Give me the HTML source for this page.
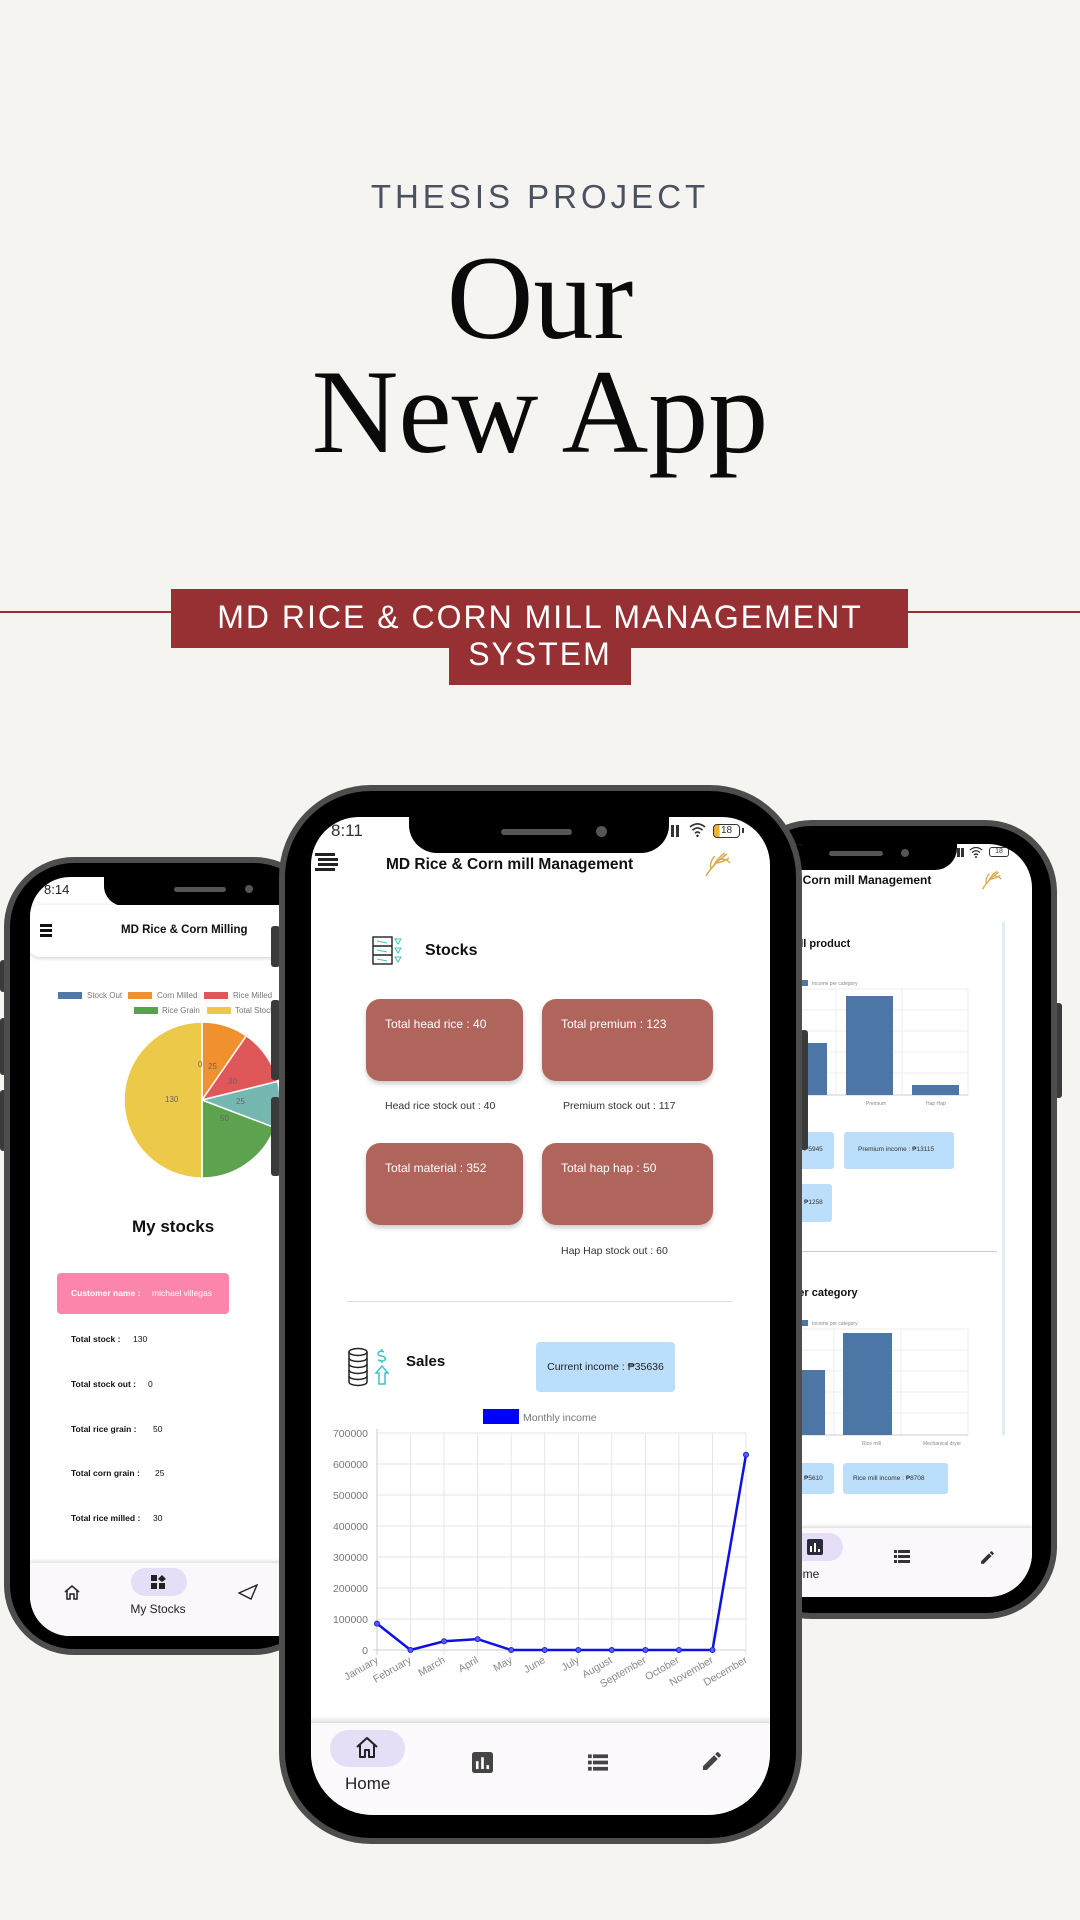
<!DOCTYPE html>
<html><head><meta charset="utf-8"><style>
*{margin:0;padding:0;box-sizing:border-box}
body{width:1080px;height:1920px;background:#f5f4f0;position:relative;overflow:hidden;font-family:"Liberation Sans",sans-serif}
.a{position:absolute}
.t{position:absolute;white-space:nowrap}
.frame{position:absolute;background:#000;border:6px solid #4d4d4d}
.scr{position:absolute;background:#fff;overflow:hidden}
.btn{position:absolute;background:#3a3a3a;border-radius:3px}
</style></head><body>

<div class="t" style="left:0;width:1080px;top:178px;text-align:center;font-size:33px;letter-spacing:4px;color:#4a5262">THESIS PROJECT</div>
<div class="t" style="left:0;width:1080px;top:238px;text-align:center;font-family:'Liberation Serif',serif;font-size:120px;line-height:120px;color:#0a0a0a">Our</div>
<div class="t" style="left:0;width:1080px;top:352px;text-align:center;font-family:'Liberation Serif',serif;font-size:120px;line-height:120px;color:#0a0a0a">New App</div>

<div class="a" style="left:0;top:611px;width:1080px;height:2px;background:#963033"></div>
<div class="a" style="left:171px;top:589px;width:737px;height:59px;background:#963033"></div>
<div class="a" style="left:449px;top:646px;width:182px;height:39px;background:#963033"></div>
<div class="t" style="left:0;width:1080px;top:599px;text-align:center;font-size:32px;letter-spacing:2px;color:#fff;line-height:36px">MD RICE &amp; CORN MILL MANAGEMENT</div>
<div class="t" style="left:0;width:1080px;top:636px;text-align:center;font-size:32px;letter-spacing:2px;color:#fff;line-height:36px">SYSTEM</div>

<!-- LEFT PHONE -->
<div class="btn" style="left:0;top:960px;width:6px;height:32px"></div>
<div class="btn" style="left:0;top:1018px;width:6px;height:57px"></div>
<div class="btn" style="left:0;top:1090px;width:6px;height:61px"></div>
<div class="frame" style="left:4px;top:857px;width:320px;height:798px;border-radius:70px"></div>
<div class="scr" style="left:30px;top:877px;width:290px;height:759px;border-radius:40px">
  <div class="t" style="left:14px;top:5px;font-size:13px;color:#222">8:14</div>
  <div class="a" style="left:74px;top:0;width:230px;height:29px;background:#000;border-bottom-left-radius:20px"></div>
  <div class="a" style="left:144px;top:10px;width:52px;height:5px;background:#555;border-radius:3px"></div>
  <div class="a" style="left:215px;top:8px;width:8px;height:8px;background:#555;border-radius:50%"></div>
  <div class="a" style="left:-2px;top:28px;width:300px;height:52px;background:#fff;border-radius:12px;box-shadow:0 1px 4px rgba(0,0,0,.2)"></div>
  <div class="a" style="left:10px;top:47px;width:12px;height:3px;background:#111;box-shadow:0 5px 0 #111,0 10px 0 #111"></div>
  <div class="t" style="left:91px;top:47px;font-size:11.5px;font-weight:bold;color:#111">MD Rice &amp; Corn Milling</div>
  <svg class="a" style="left:0;top:0" width="290" height="759">
    <g font-family="Liberation Sans" font-size="8" fill="#777">
      <rect x="28" y="115" width="24" height="7" fill="#4e79a7"/><text x="57" y="121">Stock Out</text>
      <rect x="98" y="115" width="24" height="7" fill="#f28e2b"/><text x="127" y="121">Corn Milled</text>
      <rect x="174" y="115" width="24" height="7" fill="#e15759"/><text x="203" y="121">Rice Milled</text>
      <rect x="104" y="130" width="24" height="7" fill="#59a14f"/><text x="132" y="136">Rice Grain</text>
      <rect x="177" y="130" width="24" height="7" fill="#edc948"/><text x="205" y="136">Total Stock</text>
    </g>
    <g stroke="#fff" stroke-width="1.5">
      <path d="M172 223 L172 145 A78 78 0 0 1 216.3 158.8Z" fill="#f0902f"/>
      <path d="M172 223 L216.3 158.8 A78 78 0 0 1 247.7 204.4Z" fill="#e05759"/>
      <path d="M172 223 L247.7 204.4 A78 78 0 0 1 244.9 250.7Z" fill="#76b7b2"/>
      <path d="M172 223 L244.9 250.7 A78 78 0 0 1 172 301Z" fill="#5da34f"/>
      <path d="M172 223 L172 301 A78 78 0 0 1 172 145Z" fill="#ecc948"/>
    </g>
    <g font-family="Liberation Sans" font-size="8" fill="#666">
      <text x="135" y="225">130</text><text x="168" y="190">0</text><text x="178" y="192">25</text>
      <text x="198" y="207">30</text><text x="206" y="227">25</text><text x="190" y="244">50</text>
    </g>
  </svg>
  <div class="t" style="left:102px;top:340px;font-size:17px;font-weight:bold;color:#111">My stocks</div>
  <div class="a" style="left:27px;top:396px;width:172px;height:41px;background:#fc86ab;border-radius:4px"></div>
  <div class="t" style="left:41px;top:411px;font-size:8.5px;font-weight:bold;color:#fff">Customer name :</div>
  <div class="t" style="left:122px;top:411px;font-size:8.5px;color:#fff">michael villegas</div>
  <div style="font-size:8.5px;color:#111">
    <div class="t" style="left:41px;top:457px;font-weight:bold">Total stock :</div><div class="t" style="left:103px;top:457px">130</div>
    <div class="t" style="left:41px;top:502px;font-weight:bold">Total stock out :</div><div class="t" style="left:118px;top:502px">0</div>
    <div class="t" style="left:41px;top:547px;font-weight:bold">Total rice grain :</div><div class="t" style="left:123px;top:547px">50</div>
    <div class="t" style="left:41px;top:591px;font-weight:bold">Total corn grain :</div><div class="t" style="left:125px;top:591px">25</div>
    <div class="t" style="left:41px;top:636px;font-weight:bold">Total rice milled :</div><div class="t" style="left:123px;top:636px">30</div>
  </div>
  <div class="a" style="left:0;top:686px;width:290px;height:80px;background:#fbf8fc;box-shadow:0 -2px 3px rgba(0,0,0,.12)"></div>
  <div class="a" style="left:101px;top:691px;width:56px;height:28px;background:#e6def6;border-radius:14px"></div>
  <svg class="a" style="left:33px;top:707px" width="18" height="17" viewBox="0 0 18 17"><path d="M2 8 L9 2 L16 8 M4 7 V15 H7 V10 H11 V15 H14 V7" fill="none" stroke="#222" stroke-width="1.5"/></svg>
  <svg class="a" style="left:121px;top:698px" width="15" height="15" viewBox="0 0 15 15"><rect x="0" y="0" width="6" height="6" fill="#222"/><rect x="0" y="8" width="6" height="6" fill="#222"/><rect x="8" y="8" width="6" height="6" fill="#222"/><path d="M11 0 L15 4 L11 7 L7 4Z" fill="#222"/></svg>
  <div class="t" style="left:98px;top:725px;font-size:12px;color:#222;width:60px;text-align:center">My Stocks</div>
  <svg class="a" style="left:208px;top:707px" width="20" height="16" viewBox="0 0 20 16"><path d="M1 9 L19 1 L13 15 Z M1 9 L13 15" fill="none" stroke="#222" stroke-width="1.4"/></svg>
</div>

<!-- RIGHT PHONE -->
<div class="btn" style="left:1055px;top:1003px;width:7px;height:95px"></div>
<div class="frame" style="left:740px;top:820px;width:317px;height:799px;border-radius:72px"></div>
<div class="scr" style="left:760px;top:844px;width:272px;height:753px;border-radius:44px">
  <div class="a" style="left:0;top:0;width:197px;height:26px;background:#000;border-bottom-right-radius:22px"></div>
  <div class="a" style="left:69px;top:7px;width:54px;height:5px;background:#555;border-radius:3px"></div>
  <div class="a" style="left:141px;top:5px;width:8px;height:8px;background:#555;border-radius:50%"></div>
  <div class="a" style="left:197px;top:4px;width:3px;height:9px;background:#333;box-shadow:4px 0 0 #333"></div>
  <svg class="a" style="left:209px;top:2px" width="14" height="12" viewBox="0 0 14 12"><path d="M1 4 Q7 -1 13 4 M3 6.5 Q7 3 11 6.5 M5 9 Q7 7 9 9" fill="none" stroke="#333" stroke-width="1.3"/><circle cx="7" cy="11" r="1" fill="#333"/></svg>
  <div class="a" style="left:229px;top:3px;width:20px;height:10px;border:1.3px solid #333;border-radius:3px;font-size:7px;line-height:8px;text-align:center;color:#333">18</div>
  <div class="t" style="left:-20px;top:29px;font-size:12px;font-weight:bold;color:#111">MD Rice &amp; Corn mill Management</div>
  <svg class="a" style="left:220px;top:25px" width="22" height="21" viewBox="0 0 28 27"><g fill="none" stroke="#d8a94a" stroke-width="1.6"><path d="M3 26 Q10 14 24 4"/><path d="M10 17 Q14 8 22 3 M14 13 Q20 12 26 8 M8 20 Q6 12 12 6 M18 9 Q24 9 27 13"/></g></svg>
  <div class="a" style="left:242px;top:78px;width:3px;height:513px;background:#dcefed"></div>
  <div class="t" style="left:28px;top:94px;font-size:11px;font-weight:bold;color:#111">Mill product</div>
  <svg class="a" style="left:0;top:0" width="272" height="753">
    <g stroke="#eee" stroke-width="1">
      <line x1="10" y1="145" x2="208" y2="145"/><line x1="10" y1="166" x2="208" y2="166"/><line x1="10" y1="187" x2="208" y2="187"/><line x1="10" y1="208" x2="208" y2="208"/><line x1="10" y1="229" x2="208" y2="229"/>
      <line x1="76" y1="145" x2="76" y2="251"/><line x1="142" y1="145" x2="142" y2="251"/><line x1="208" y1="145" x2="208" y2="251"/>
      <line x1="10" y1="485" x2="208" y2="485"/><line x1="10" y1="506" x2="208" y2="506"/><line x1="10" y1="527" x2="208" y2="527"/><line x1="10" y1="548" x2="208" y2="548"/><line x1="10" y1="569" x2="208" y2="569"/>
      <line x1="74" y1="485" x2="74" y2="591"/><line x1="141" y1="485" x2="141" y2="591"/><line x1="208" y1="485" x2="208" y2="591"/>
    </g>
    <line x1="10" y1="251" x2="208" y2="251" stroke="#ccc"/><line x1="10" y1="591" x2="208" y2="591" stroke="#ccc"/>
    <g fill="#4b76a6">
      <rect x="30" y="136" width="18" height="6"/><rect x="20" y="199" width="47" height="52"/><rect x="86" y="152" width="47" height="99"/><rect x="152" y="241" width="47" height="10"/>
      <rect x="30" y="476" width="18" height="6"/><rect x="20" y="526" width="45" height="65"/><rect x="83" y="489" width="49" height="102"/>
    </g>
    <g font-family="Liberation Sans" font-size="5" fill="#888">
      <text x="52" y="141">Income per category</text><text x="52" y="481">Income per category</text>
      <text x="106" y="261">Premium</text><text x="166" y="261">Hap Hap</text>
      <text x="102" y="601">Rice mill</text><text x="163" y="601">Mechanical dryer</text>
    </g>
  </svg>
  <div class="a" style="left:-40px;top:288px;width:114px;height:37px;background:#bbdefb;border-radius:3px"></div>
  <div class="t" style="left:44px;top:302px;font-size:6.5px;color:#333">₱5945</div>
  <div class="a" style="left:84px;top:288px;width:110px;height:37px;background:#bbdefb;border-radius:3px"></div>
  <div class="t" style="left:98px;top:302px;font-size:6.5px;color:#333">Premium income : ₱13115</div>
  <div class="a" style="left:-40px;top:340px;width:112px;height:38px;background:#bbdefb;border-radius:3px"></div>
  <div class="t" style="left:44px;top:355px;font-size:6.5px;color:#333">₱1258</div>
  <div class="a" style="left:0;top:407px;width:237px;height:1px;background:#ccc"></div>
  <div class="t" style="left:-10px;top:443px;font-size:11px;font-weight:bold;color:#111">Income per category</div>
  <div class="a" style="left:-40px;top:619px;width:114px;height:31px;background:#bbdefb;border-radius:3px"></div>
  <div class="t" style="left:44px;top:631px;font-size:6.5px;color:#333">₱5610</div>
  <div class="a" style="left:83px;top:619px;width:105px;height:31px;background:#bbdefb;border-radius:3px"></div>
  <div class="t" style="left:93px;top:631px;font-size:6.5px;color:#333">Rice mill income : ₱8708</div>
  <div class="a" style="left:0;top:684px;width:272px;height:80px;background:#fbf8fc;box-shadow:0 -2px 3px rgba(0,0,0,.12)"></div>
  <div class="a" style="left:20px;top:689px;width:63px;height:28px;background:#e6def6;border-radius:14px"></div>
  <svg class="a" style="left:47px;top:695px" width="16" height="16" viewBox="0 0 16 16"><rect width="16" height="16" rx="2" fill="#2a2a3a"/><rect x="3" y="7" width="2" height="6" fill="#fff"/><rect x="7" y="4" width="2" height="9" fill="#fff"/><rect x="11" y="10" width="2" height="3" fill="#fff"/></svg>
  <div class="t" style="left:20px;top:723px;font-size:12px;color:#222">Income</div>
  <svg class="a" style="left:134px;top:706px" width="16" height="13" viewBox="0 0 16 13"><g fill="#333"><rect x="0" y="0" width="3" height="3"/><rect x="4" y="0" width="12" height="3"/><rect x="0" y="5" width="3" height="3"/><rect x="4" y="5" width="12" height="3"/><rect x="0" y="10" width="3" height="3"/><rect x="4" y="10" width="12" height="3"/></g></svg>
  <svg class="a" style="left:219px;top:705px" width="17" height="17" viewBox="0 0 24 24"><path d="M3 17.25V21h3.75L17.8 9.94l-3.75-3.75L3 17.25zM20.7 7.04a1 1 0 0 0 0-1.41l-2.34-2.34a1 1 0 0 0-1.41 0l-1.83 1.83 3.75 3.75 1.83-1.83z" fill="#333"/></svg>
</div>

<!-- CENTER PHONE -->
<div class="btn" style="left:271px;top:926px;width:9px;height:41px"></div>
<div class="btn" style="left:271px;top:1000px;width:9px;height:80px"></div>
<div class="btn" style="left:271px;top:1097px;width:9px;height:79px"></div>
<div class="btn" style="left:800px;top:1030px;width:8px;height:120px"></div>
<div class="frame" style="left:279px;top:785px;width:523px;height:1059px;border-radius:92px"></div>
<div class="scr" style="left:311px;top:817px;width:459px;height:998px;border-radius:48px 48px 62px 62px">
  <div class="t" style="left:20px;top:4px;font-size:17px;color:#333">8:11</div>
  <div class="a" style="left:98px;top:0;width:260px;height:36px;background:#000;border-radius:0 0 28px 28px"></div>
  <div class="a" style="left:190px;top:12px;width:71px;height:6px;background:#555;border-radius:3px"></div>
  <div class="a" style="left:285px;top:9px;width:11px;height:11px;background:#555;border-radius:50%"></div>
  <div class="a" style="left:360px;top:8px;width:3px;height:12px;background:#333;box-shadow:5px 0 0 #333"></div>
  <svg class="a" style="left:377px;top:5px" width="19" height="15" viewBox="0 0 14 12"><path d="M1 4 Q7 -1 13 4 M3 6.5 Q7 3 11 6.5 M5 9 Q7 7 9 9" fill="none" stroke="#333" stroke-width="1.3"/><circle cx="7" cy="11" r="1" fill="#333"/></svg>
  <div class="a" style="left:402px;top:7px;width:27px;height:14px;border:1.5px solid #333;border-radius:4px;font-size:10px;line-height:11px;text-align:center;color:#333;background:linear-gradient(90deg,#f2b233 0 22%,transparent 22%)">18</div>
  <div class="a" style="left:431px;top:11px;width:2px;height:5px;background:#333"></div>
  <div class="a" style="left:4px;top:36px;width:20px;height:3px;background:#222;box-shadow:3px 5px 0 #222,3px 10px 0 #222,0 15px 0 #222;"></div>
  <div class="t" style="left:75px;top:39px;font-size:15.5px;font-weight:bold;color:#111">MD Rice &amp; Corn mill Management</div>
  <svg class="a" style="left:392px;top:33px" width="28" height="27" viewBox="0 0 28 27"><g fill="none" stroke="#d8a94a" stroke-width="1.4"><path d="M3 26 Q10 14 24 4"/><path d="M10 17 Q14 8 22 3 M14 13 Q20 12 26 8 M8 20 Q6 12 12 6 M18 9 Q24 9 27 13"/></g></svg>
  <svg class="a" style="left:61px;top:119px" width="30" height="29" viewBox="0 0 30 29"><g fill="none" stroke="#222" stroke-width="1.4"><rect x="1" y="1" width="19" height="27"/><line x1="1" y1="10" x2="20" y2="10"/><line x1="1" y1="19" x2="20" y2="19"/></g><g fill="none" stroke="#3cc4c4" stroke-width="1"><path d="M5 5 L15 7 M5 14 L15 16 M5 23 L15 25"/><path d="M23 3 H29 L26 8Z M23 12 H29 L26 17Z M23 21 H29 L26 26Z"/></g></svg>
  <div class="t" style="left:114px;top:125px;font-size:16px;font-weight:bold;color:#111">Stocks</div>
  <div class="a" style="left:55px;top:182px;width:157px;height:82px;background:#b0655c;border-radius:14px;box-shadow:0 3px 5px rgba(0,0,0,.2)"></div>
  <div class="a" style="left:231px;top:182px;width:171px;height:82px;background:#b0655c;border-radius:14px;box-shadow:0 3px 5px rgba(0,0,0,.2)"></div>
  <div class="a" style="left:55px;top:326px;width:157px;height:82px;background:#b0655c;border-radius:14px;box-shadow:0 3px 5px rgba(0,0,0,.2)"></div>
  <div class="a" style="left:231px;top:326px;width:171px;height:82px;background:#b0655c;border-radius:14px;box-shadow:0 3px 5px rgba(0,0,0,.2)"></div>
  <div class="t" style="left:74px;top:200px;font-size:12px;color:#fff">Total head rice : 40</div>
  <div class="t" style="left:250px;top:200px;font-size:12px;color:#fff">Total premium : 123</div>
  <div class="t" style="left:74px;top:344px;font-size:12px;color:#fff">Total material : 352</div>
  <div class="t" style="left:250px;top:344px;font-size:12px;color:#fff">Total hap hap : 50</div>
  <div class="t" style="left:74px;top:283px;font-size:10.5px;color:#333">Head rice stock out : 40</div>
  <div class="t" style="left:252px;top:283px;font-size:10.5px;color:#333">Premium stock out : 117</div>
  <div class="t" style="left:250px;top:428px;font-size:10.5px;color:#333">Hap Hap stock out : 60</div>
  <div class="a" style="left:36px;top:484px;width:385px;height:1px;background:#ddd"></div>
  <svg class="a" style="left:36px;top:530px" width="42" height="41" viewBox="0 0 42 41"><g fill="none" stroke="#222" stroke-width="1.5"><ellipse cx="11" cy="5" rx="9" ry="3.5"/><path d="M2 5 V35 A9 3.5 0 0 0 20 35 V5"/><path d="M2 11 A9 3.5 0 0 0 20 11 M2 17 A9 3.5 0 0 0 20 17 M2 23 A9 3.5 0 0 0 20 23 M2 29 A9 3.5 0 0 0 20 29"/></g><g fill="none" stroke="#3cc4c4" stroke-width="1.5"><path d="M35 2 V4 M37 5 Q33 3 31 6 Q31 9 35 9 Q39 10 38 13 Q36 15 31 13 M35 14 V16"/><path d="M35 19 L29 26 H32 V37 H38 V26 H41Z"/></g></svg>
  <div class="t" style="left:95px;top:536px;font-size:15px;font-weight:bold;color:#111">Sales</div>
  <div class="a" style="left:225px;top:525px;width:139px;height:50px;background:#bbdefb;border-radius:4px"></div>
  <div class="t" style="left:225px;top:544px;width:139px;text-align:center;font-size:10.5px;color:#222">Current income : ₱35636</div>
  <svg class="a" style="left:0;top:0" width="459" height="998">
    <rect x="172" y="592" width="36" height="15" fill="#0000ff"/>
    <text x="212" y="604" font-family="Liberation Sans" font-size="10.5" fill="#777">Monthly income</text>
    <g stroke="#e6e6e6" stroke-width="1">
      <line x1="66" y1="616" x2="435" y2="616"/><line x1="66" y1="647" x2="435" y2="647"/><line x1="66" y1="678" x2="435" y2="678"/><line x1="66" y1="709" x2="435" y2="709"/><line x1="66" y1="740" x2="435" y2="740"/><line x1="66" y1="771" x2="435" y2="771"/><line x1="66" y1="802" x2="435" y2="802"/>
      <line x1="99.5" y1="616" x2="99.5" y2="838"/><line x1="133.1" y1="616" x2="133.1" y2="838"/><line x1="166.6" y1="616" x2="166.6" y2="838"/><line x1="200.2" y1="616" x2="200.2" y2="838"/><line x1="233.7" y1="616" x2="233.7" y2="838"/><line x1="267.3" y1="616" x2="267.3" y2="838"/><line x1="300.8" y1="616" x2="300.8" y2="838"/><line x1="334.4" y1="616" x2="334.4" y2="838"/><line x1="367.9" y1="616" x2="367.9" y2="838"/><line x1="401.5" y1="616" x2="401.5" y2="838"/><line x1="435" y1="616" x2="435" y2="838"/>
    </g>
    <line x1="66" y1="612" x2="66" y2="838" stroke="#ccc"/><line x1="62" y1="833" x2="435" y2="833" stroke="#ccc"/>
    <g font-family="Liberation Sans" font-size="10.5" fill="#777" text-anchor="end">
      <text x="57" y="620">700000</text><text x="57" y="651">600000</text><text x="57" y="682">500000</text><text x="57" y="713">400000</text><text x="57" y="744">300000</text><text x="57" y="775">200000</text><text x="57" y="806">100000</text><text x="57" y="837">0</text>
    </g>
    <polyline points="66,806.6 99.5,833 133.1,824.3 166.6,822.1 200.2,833 233.7,833 267.3,833 300.8,833 334.4,833 367.9,833 401.5,833 435,637.7" fill="none" stroke="#1010e0" stroke-width="2.5"/>
    <g fill="#5060f0" stroke="#2020d0" stroke-width="1">
      <circle cx="66" cy="806.6" r="2.5"/><circle cx="99.5" cy="833" r="2.5"/><circle cx="133.1" cy="824.3" r="2.5"/><circle cx="166.6" cy="822.1" r="2.5"/><circle cx="200.2" cy="833" r="2.5"/><circle cx="233.7" cy="833" r="2.5"/><circle cx="267.3" cy="833" r="2.5"/><circle cx="300.8" cy="833" r="2.5"/><circle cx="334.4" cy="833" r="2.5"/><circle cx="367.9" cy="833" r="2.5"/><circle cx="401.5" cy="833" r="2.5"/><circle cx="435" cy="637.7" r="2.5"/>
    </g>
    <g font-family="Liberation Sans" font-size="10.5" fill="#888" text-anchor="end">
      <text transform="translate(68,845) rotate(-30)">January</text>
      <text transform="translate(101,845) rotate(-30)">February</text>
      <text transform="translate(135,845) rotate(-30)">March</text>
      <text transform="translate(168,845) rotate(-30)">April</text>
      <text transform="translate(202,845) rotate(-30)">May</text>
      <text transform="translate(235,845) rotate(-30)">June</text>
      <text transform="translate(269,845) rotate(-30)">July</text>
      <text transform="translate(302,845) rotate(-30)">August</text>
      <text transform="translate(336,845) rotate(-30)">September</text>
      <text transform="translate(369,845) rotate(-30)">October</text>
      <text transform="translate(403,845) rotate(-30)">November</text>
      <text transform="translate(437,845) rotate(-30)">December</text>
    </g>
  </svg>
  <div class="a" style="left:-2px;top:905px;width:463px;height:100px;background:#fdfafd;border:1px solid #ddd;box-shadow:0 -3px 4px rgba(0,0,0,.1)"></div>
  <div class="a" style="left:19px;top:913px;width:75px;height:37px;background:#e6def6;border-radius:19px"></div>
  <svg class="a" style="left:44px;top:919px" width="24" height="24" viewBox="0 0 24 24"><path d="M2 11 L12 2 L22 11 M5 9 V21 H10 V14 H14 V21 H19 V9" fill="none" stroke="#222" stroke-width="2" stroke-linejoin="round"/></svg>
  <div class="t" style="left:34px;top:957px;font-size:17px;color:#222">Home</div>
  <svg class="a" style="left:161px;top:935px" width="21" height="21" viewBox="0 0 16 16"><rect width="16" height="16" rx="2" fill="#444"/><rect x="3" y="7" width="2" height="6" fill="#fff"/><rect x="7" y="4" width="2" height="9" fill="#fff"/><rect x="11" y="10" width="2" height="3" fill="#fff"/></svg>
  <svg class="a" style="left:277px;top:937px" width="20" height="17" viewBox="0 0 16 13"><g fill="#444"><rect x="0" y="0" width="3" height="3"/><rect x="4" y="0" width="12" height="3"/><rect x="0" y="5" width="3" height="3"/><rect x="4" y="5" width="12" height="3"/><rect x="0" y="10" width="3" height="3"/><rect x="4" y="10" width="12" height="3"/></g></svg>
  <svg class="a" style="left:389px;top:932px" width="24" height="24" viewBox="0 0 24 24"><path d="M3 17.25V21h3.75L17.8 9.94l-3.75-3.75L3 17.25zM20.7 7.04a1 1 0 0 0 0-1.41l-2.34-2.34a1 1 0 0 0-1.41 0l-1.83 1.83 3.75 3.75 1.83-1.83z" fill="#444"/></svg>
</div>

</body></html>
